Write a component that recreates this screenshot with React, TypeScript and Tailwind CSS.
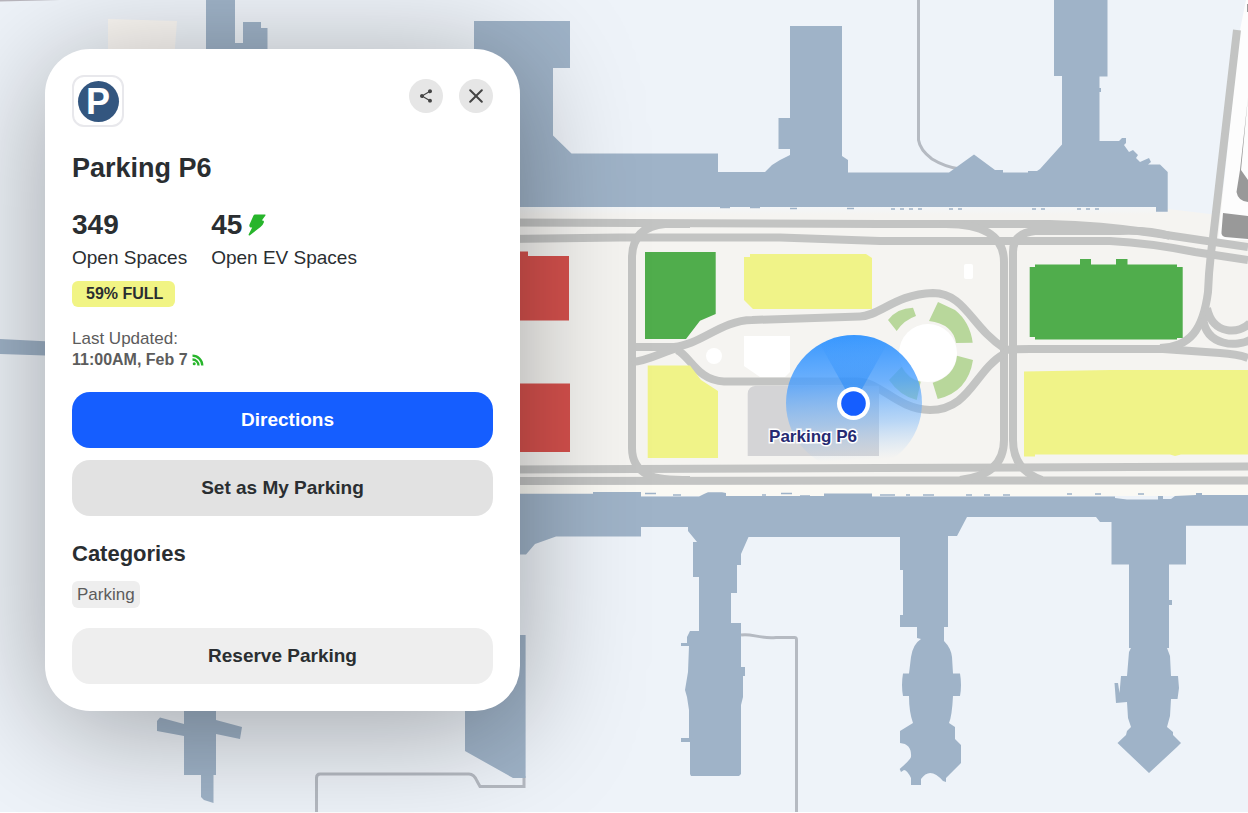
import React from "react";
import { MdShare } from "react-icons/md";

interface ActionButtonProps {
    children: React.ReactNode;
    variant?: "primary" | "secondary" | "muted";
    className?: string;
}

const variantClasses: Record<string, string> = {
    primary: "bg-[#155eff] pl-2.5 text-white",
    secondary: "bg-[#e2e2e2] text-[#2a2e31]",
    muted: "bg-[#eeeeee] text-[#2a2e31]",
};

const NORTH_TERMINALS =
    "M474 21H570V68H553V135.500L571.500 153.500H718V172H765L772 165L780 160L790 155V149H778.500V118H790V26H842V156L848 160V172.500H949L974 154.500L995 170H1003V172.500H1028V171H1037L1040 169L1062 144.500V76H1054V0H1107.500V76.500H1099.500V88H1101V92H1099.500V141H1119L1122 138H1126V143L1124 145L1129 152L1133 150L1138 155L1136 158L1140 162L1149 158L1151 162L1148 164.500H1160L1167.700 172V211.700H1156V207H474Z";

const SOUTH_TERMINALS =
    "M500 493.700H593V492H641V496.500H699L704 494L708 492.300H722L726 493V496H824V493.500H872V496.500H1115V498L1127 499.500H1158V496H1163V499L1171 499L1175 496L1196 495V493H1202V495H1248V525.700H1186V564.500H1169V600H1172V605H1169V648H1167L1170 656L1171 676H1178L1179 688L1177.500 699H1171L1170 716L1167 727L1173 732V735L1181 743L1177 747L1149 773L1117.500 743L1126 735L1127 731L1131 727L1128 718L1127 702L1116 703L1114.500 683H1118L1119.500 693L1121 676H1127L1129 652L1131 648H1129V564.500H1111.500V522H1100L1096 517H967L957 536H948V627H944V641Q951 648 952 657L953 673.500H960Q962 685 960 696H953Q952 716 949 723L955 727V739L961 745V763L946 778V782L943 781Q930 766 921 779V785H911V778Q907 770 904 770L901 772L899.700 769Q910 760 911 757Q912 744 900 743V731L913 723Q909 712 909 696H903Q901 685 903 673.500H909L911 657Q913 644 921 639L917 638V627H900V615H903V570H900V537H748.500L741 554V565H737V593H731V623H741V667H745V676H743V697L741 705V774L739 776H691L690 774V742H681V738H689V710L687 697L685 690L688 672L689 646H681V643H687V637L690 631H699V577H693V542H697L688 531V527H641V536.500H556L535 544L526 554.500H500Z";

function ActionButton({ children, variant = "primary", className = "" }: ActionButtonProps) {
    return (
        <button
            type="button"
            className={`h-14 w-full cursor-pointer rounded-[18px] text-[19px] leading-6 font-bold ${variantClasses[variant]} ${className}`}
        >
            {children}
        </button>
    );
}

function TerminalMap() {
    return (
        <svg
            className="absolute inset-0 h-full w-full"
            viewBox="0 0 1248 813"
            preserveAspectRatio="xMinYMin slice"
            role="img"
            aria-label="Terminal map"
        >
            <defs>
                <linearGradient id="land" x1="0" y1="0" x2="0" y2="1">
                    <stop offset="0" stopColor="#f3f6f9" />
                    <stop offset="0.550" stopColor="#f5f4f1" />
                    <stop offset="1" stopColor="#f5f4f1" />
                </linearGradient>
                <linearGradient id="halo" x1="0.500" y1="0" x2="0.550" y2="1">
                    <stop offset="0" stopColor="#2f93ff" stopOpacity="0.950" />
                    <stop offset="0.350" stopColor="#4a9fff" stopOpacity="0.780" />
                    <stop offset="0.650" stopColor="#6fb2fb" stopOpacity="0.450" />
                    <stop offset="0.920" stopColor="#9cc8f8" stopOpacity="0" />
                </linearGradient>
                <linearGradient id="beam" x1="0" y1="1" x2="0" y2="0">
                    <stop offset="0" stopColor="#1c82f5" stopOpacity="0.700" />
                    <stop offset="1" stopColor="#2f93ff" stopOpacity="0" />
                </linearGradient>
            </defs>

            <rect width="1248" height="813" fill="#eef3f9" />

            {/* Land between the terminals */}
            <path d="M480 208H1160L1218 215L1248 60V496H480Z" fill="#f5f4f1" />
            <path d="M480 206H1168V222H480Z" fill="url(#land)" />
            <path d="M480 485H1248V496H480Z" fill="#faf9f4" />
            <path d="M1240 30L1246 0H1248V240H1218Z" fill="#fdfdfd" />
            <path d="M108 19L177 21L174 60H108Z" fill="#fcf9f5" />
            <path d="M0 0H60L0 1.500Z" fill="#b9b6bd" />

            {/* Service roads */}
            <g fill="none" stroke="#b5bac2" strokeWidth="3">
                <path d="M918.500 0V140Q920 150 932 159Q945 167 960 169" />
                <path d="M741 635C752 633 758 639 776 637.500H794Q796.500 637 796.500 640V813" />
                <path d="M316.500 813V778Q316.500 774 320 774H469Q474 774 477 781L480 786.500H524V776" />
            </g>

            {/* Terminal buildings */}
            <g fill="#9fb3c8">
                <path d={NORTH_TERMINALS} />
                <path d={SOUTH_TERMINALS} />
                <path d="M206 0H235V43H243V22H261V28H267.500V60H206Z" />
                <path d="M0 339L60 342V356L0 354Z" />
                <path d="M184 700H216V720L242 727L240 739L216 734V775H213.500V803L204 800L201 797V775H184V736L157 731V721L160 717.500L184 724Z" />
                <path d="M465 700V751L513 778H525.600V635H500V700Z" />
            </g>
            <g fill="none" stroke="#9fb3c8" strokeWidth="1.500">
                <path d="M891 209H922M949 209H964M1032 209H1050M1077 209H1102" strokeDasharray="4 5" />
                <path d="M720 207.500H730M750 207.500H760M790 208.500H797M847 208.500H854" />
                <path d="M645 493.500H656M673 495H681M762 495H766M781 493.500H792M800 496H810" />
                <path d="M880 495H895M906 495H910M923 495H934M966 495H972M984 495H990M1003 495H1010M1067 494H1072M1095 494H1101M1138 494H1144" />
            </g>

            {/* Road network */}
            <g fill="none" stroke="#c3c4c3" strokeWidth="8">
                <path d="M500 222.500L880 224H1050Q1100 225 1153 233L1248 247" />
                <path d="M500 239L620 237.500H780L880 241H1110Q1150 243 1195 252L1248 260" />
                <path d="M1013 262V252Q1013 233 1035 231H1120Q1150 230 1170 236" />
                <path d="M500 469.500L880 468L1248 466.500" />
                <path d="M500 481L880 480.500H1248" />
                <path d="M690 224H665Q632 227 632 258V448Q632 467 648 475Q658 480 690 480" />
                <path d="M940 224Q1004 222 1004 262V440Q1004 475 960 480" />
                <path d="M1013 255V440Q1013 470 1042 480" />
                <path d="M632 347H674C700 345 722 320 752 320L860 316.500C880 316 895 294 933 293C965 293 972 328 1004 348" />
                <path d="M632 362C650 361 665 350 682 347" />
                <path d="M677 350C690 356 698 381 724 381.500H855C880 380 895 409 930 410C970 410 975 370 1004 354" />
                <path d="M1004 350Q1020 349 1030 349H1163L1220 353Q1238 354 1248 358" />
                <path d="M1237 30L1213 238Q1209 265 1208 292C1203 330 1190 347 1160 348" />
                <path d="M1207 308C1213 336 1240 334 1250 323M1203 318C1206 347 1238 347 1250 340" />
            </g>

            {/* Airside ramp at the far right */}
            <g fill="#999999">
                <path d="M1248 97L1240 170L1236.500 192Q1238 201 1248 202V180L1241 170Z" />
                <path d="M1223 213L1248 216V239L1225 237Q1221 236 1221.500 232Z" />
                <path d="M1247 4H1248V12H1247Z" />
            </g>

            {/* Garages coloured by occupancy */}
            <g fill="#d6514d">
                <path d="M500 251.500H528V256H569V320.500H500Z" />
                <path d="M500 383.500H570V452H500Z" />
            </g>
            <g fill="#50ad4c">
                <path d="M645 252H715.700V314L700 320.700L686 339H645Z" />
                <path d="M1029.700 267H1035V264.500H1080V259H1091V264.500H1116V259H1127.500V264.500H1177V267H1182.700V338H1177V339.500H1035V337H1029.700Z" />
            </g>
            <g fill="#f0f388">
                <path d="M750 254H866L872 258V309H753L744 300V257H750Z" />
                <path d="M647.700 365.500H690L701 380L718 391V458H647.700Z" />
                <path d="M1024 371.500L1110 370H1248V454.500H1181L1175 456L1170 454.500H1035V456.500H1024Z" />
            </g>
            <path d="M747.700 456V394Q748 386 756 385.700H879V456Z" fill="#d4d4d6" />

            {/* Control tower plaza */}
            <g fill="#ffffff">
                <path d="M744 336H790V372L785 377H760L744 366Z" />
                <circle cx="714" cy="356" r="8" />
                <circle cx="928" cy="353" r="29" />
                <rect x="964" y="264" width="9" height="15" rx="2" />
            </g>
            <g fill="#b8d79b">
                <path d="M938 302L955 310Q970 322 972.700 342.700L956 343Q953 324 929 321Z" />
                <path d="M888 320Q897 308 913 307.700L916 316Q904 320 896.700 331Z" />
                <path d="M957 355.700L973 360Q968 392 937.700 399L932.700 382.700Q955 376 957 355.700Z" />
                <path d="M901.700 366.700Q908 379 920.700 381.700L916.700 400Q900 396 889 380Z" />
            </g>

            {/* Selected location */}
            <circle cx="854" cy="403" r="68" fill="url(#halo)" />
            <path d="M853.500 404L820 344Q853 330 887 344Z" fill="url(#beam)" />
            <circle cx="853.500" cy="403.500" r="16.500" fill="#ffffff" />
            <circle cx="853.500" cy="403.500" r="12.300" fill="#155eff" />
            <text
                x="813"
                y="442"
                textAnchor="middle"
                className="fill-[#262a72] stroke-white stroke-[3px] text-[17px] font-bold [paint-order:stroke]"
            >
                Parking P6
            </text>

            <rect y="812" width="1248" height="1" fill="#ffffff" />
        </svg>
    );
}

function BoltIcon() {
    return (
        <svg viewBox="0 0 18 22" className="h-[22px] w-[18px]" aria-hidden="true">
            <path
                d="M5.500 1.500Q6 0.500 7 0.500H17Q18 0.600 17.400 1.500L13.800 6.500H15Q16.300 6.800 15.800 8.500Q15 11 12.500 13L2 21.200Q0.500 22 0.600 20.500L4.200 13.500H2.500Q0.800 13 1.500 10.500Z"
                fill="#27b52b"
            />
        </svg>
    );
}

function LiveIcon() {
    return (
        <svg viewBox="0 0 12 12" className="h-3 w-3" aria-hidden="true">
            <circle cx="2.200" cy="9.800" r="1.500" fill="#27b52b" />
            <path d="M0.500 5.500A6 6 0 0 1 6.500 11.500M0.500 1.700A9.800 9.800 0 0 1 10.300 11.500" fill="none" stroke="#27b52b" strokeWidth="2.300" />
        </svg>
    );
}

function ParkingCard() {
    return (
        <section className="relative w-[475px] max-w-full rounded-[45px] bg-white px-[27px] pt-[26px] pb-[27px] text-[#2a2e31] shadow-[0_16px_120px_rgba(0,0,0,0.34)]">
            <header className="flex items-start justify-between">
                <div className="flex h-[52px] w-[52px] items-center justify-center rounded-xl border-2 border-[#e8e8ec] bg-white">
                    <div className="flex h-[41px] w-[41px] items-center justify-center rounded-full bg-[#33567f] pt-0.5 text-[36px] leading-none font-bold text-white">
                        P
                    </div>
                </div>
                <div className="mt-1 flex gap-4">
                    <button
                        type="button"
                        aria-label="Share"
                        className="flex h-[34px] w-[34px] cursor-pointer items-center justify-center rounded-full bg-[#e6e6e6] text-[#444444]"
                    >
                        <MdShare className="h-4 w-4" />
                    </button>
                    <button
                        type="button"
                        aria-label="Close"
                        className="flex h-[34px] w-[34px] cursor-pointer items-center justify-center rounded-full bg-[#e6e6e6] text-[#444444]"
                    >
                        <svg viewBox="0 0 14 14" className="h-3.5 w-3.5" aria-hidden="true">
                            <path d="M1.200 1.200L12.800 12.800M12.800 1.200L1.200 12.800" stroke="currentColor" strokeWidth="2" strokeLinecap="round" />
                        </svg>
                    </button>
                </div>
            </header>

            <h1 className="mt-[25px] text-[27px] leading-8 font-bold">Parking P6</h1>

            <dl className="mt-[25px] flex gap-6">
                <div className="flex flex-col-reverse gap-1">
                    <dt className="text-[19px] leading-[26px]">Open Spaces</dt>
                    <dd className="text-[28px] leading-8 font-bold">349</dd>
                </div>
                <div className="flex flex-col-reverse gap-1">
                    <dt className="text-[19px] leading-[26px]">Open EV Spaces</dt>
                    <dd className="flex items-center gap-1.5 text-[28px] leading-8 font-bold">
                        45
                        <BoltIcon />
                    </dd>
                </div>
            </dl>

            <div className="mt-2.5 flex">
                <span className="rounded-md bg-[#f1f484] pr-3 pl-3.5 text-[16px] leading-[26px] font-bold">59% FULL</span>
            </div>

            <div className="mt-[21px] text-[#5c5c5c]">
                <p className="text-[17px] leading-[21px]">Last Updated:</p>
                <p className="flex items-center gap-1 text-[16px] leading-[21px] font-bold">
                    11:00AM, Feb 7
                    <LiveIcon />
                </p>
            </div>

            <div className="mt-[22px] flex flex-col gap-3">
                <ActionButton>Directions</ActionButton>
                <ActionButton variant="secondary">Set as My Parking</ActionButton>
            </div>

            <h2 className="mt-6 text-[22px] leading-7 font-bold">Categories</h2>
            <div className="mt-[13px] flex">
                <span className="rounded-md bg-[#eeeeee] px-[5px] text-[17px] leading-[27px] text-[#5c5c5c]">Parking</span>
            </div>

            <ActionButton variant="muted" className="mt-5">
                Reserve Parking
            </ActionButton>
        </section>
    );
}

export default function App() {
    return (
        <main className="relative min-h-screen overflow-hidden px-[45px] pt-[49px] pb-12 font-['Liberation_Sans',Arial,sans-serif]">
            <TerminalMap />
            <ParkingCard />
        </main>
    );
}
